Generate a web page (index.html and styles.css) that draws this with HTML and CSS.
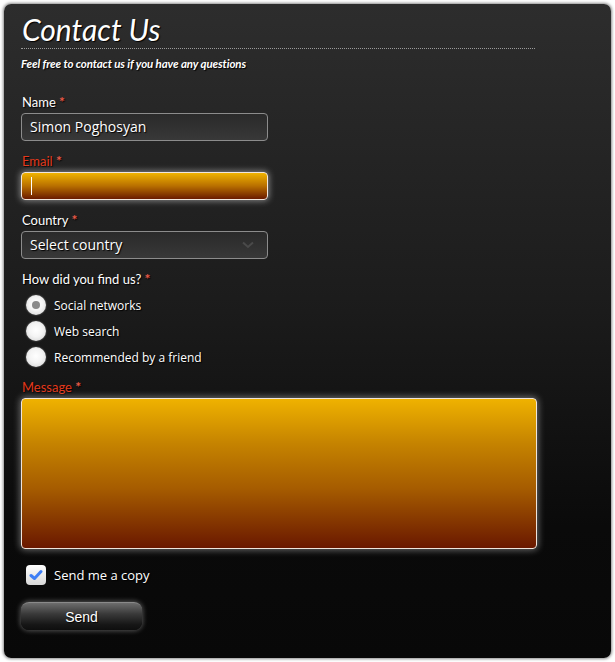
FILE: index.html
```html
<!DOCTYPE html>
<html>
<head>
<meta charset="utf-8">
<link rel="stylesheet" href="styles.css">
</head>
<body>
<form class="panel">
  <h1 class="title">Contact Us</h1>
  <p class="subtitle">Feel free to contact us if you have any questions</p>

  <div class="field">
    <label class="label">Name <span class="req">*</span></label>
    <div class="input">Simon Poghosyan</div>
  </div>

  <div class="field">
    <label class="label error">Email <span class="req">*</span></label>
    <div class="input focus"><span class="caret"></span></div>
  </div>

  <div class="field">
    <label class="label">Country <span class="req">*</span></label>
    <div class="input select">
      <span>Select country</span>
      <svg class="chev" width="12" height="8" viewBox="0 0 12 8"><path d="M1 1.5 L6 6 L11 1.5" fill="none" stroke="#4a4a4a" stroke-width="2"/></svg>
    </div>
  </div>

  <div class="field">
    <label class="label">How did you find us? <span class="req">*</span></label>
    <div class="radios">
      <div class="radio-row"><span class="radio checked"></span><span>Social networks</span></div>
      <div class="radio-row"><span class="radio"></span><span>Web search</span></div>
      <div class="radio-row"><span class="radio"></span><span>Recommended by a friend</span></div>
    </div>
  </div>

  <div class="field">
    <label class="label error">Message <span class="req">*</span></label>
    <div class="textarea"></div>
  </div>

  <div class="check-row">
    <span class="checkbox">
      <svg width="14" height="12" viewBox="0 0 14 12"><path d="M2 6.5 L5.5 9.5 L12 2.5" fill="none" stroke="#3d7ef5" stroke-width="3" stroke-linecap="round" stroke-linejoin="round"/></svg>
    </span>
    <span>Send me a copy</span>
  </div>

  <div class="actions">
    <button type="button" class="send">Send</button>
  </div>
</form>
</body>
</html>
```

FILE: styles.css
```css
html, body {
  margin: 0;
  padding: 0;
  background: #ffffff;
}
body {
  padding: 4px;
}
.panel {
  box-sizing: border-box;
  width: 607px;
  height: 654px;
  margin: 0;
  padding: 8px 18px 0 17px;
  border-radius: 7px;
  background: linear-gradient(to bottom, #2d2d2d 0%, #1c1c1c 45%, #0a0a0a 80%, #080808 100%);
  box-shadow: 0 0 3px 1px #8a8a8a;
  color: #ffffff;
  font-family: "Open Sans", sans-serif;
  display: flex;
  flex-direction: column;
}
.title {
  margin: 0;
  width: 513px;
  font-family: Lato, sans-serif;
  font-style: italic;
  font-weight: 400;
  font-size: 30px;
  line-height: 34px;
  padding: 0 0 2px 1px;
  border-bottom: 1px dotted #9a9a9a;
  text-shadow: 1px 1px 1px #000;
}
.subtitle {
  margin: 8px 0 0 0;
  font-family: Lato, sans-serif;
  font-style: italic;
  font-weight: 700;
  font-size: 11.5px;
  line-height: 14px;
  letter-spacing: -0.1px;
  text-shadow: 1px 1px 1px #000;
}
.field {
  display: flex;
  flex-direction: column;
  margin-top: 12px;
}
.field:first-of-type {
  margin-top: 23px;
}
.label {
  font-family: Lato, sans-serif;
  font-size: 13px;
  line-height: 16px;
  margin: 0 0 3px 1px;
  color: #ffffff;
  text-shadow: 1px 1px 1px #000;
}
.label.error {
  color: #e2391c;
}
.req {
  color: #e85a48;
  font-weight: 700;
  font-size: 14px;
}
.input {
  box-sizing: border-box;
  width: 247px;
  height: 28px;
  border: 1px solid #8c8c8c;
  border-radius: 4px;
  background: linear-gradient(to bottom, #2a2a2a, #383838);
  padding: 0 0 0 8px;
  font-size: 14px;
  line-height: 26px;
  color: #ffffff;
  text-shadow: 1px 1px 1px #000;
  display: flex;
  align-items: center;
}
.input.focus {
  border-color: #f2e6dc;
  background: linear-gradient(to bottom, #f0b300 0%, #b86f00 50%, #6a1a00 100%);
  box-shadow: 0 0 6px 1px rgba(255, 255, 255, 0.45);
}
.caret {
  display: block;
  width: 1px;
  height: 18px;
  background: #ffffff;
  margin-left: 1px;
}
.select {
  justify-content: space-between;
  padding-right: 13px;
}
.chev {
  display: block;
}
.radios {
  display: flex;
  flex-direction: column;
  gap: 6px;
  margin-top: 5px;
  padding-left: 5px;
}
.radio-row {
  display: flex;
  align-items: center;
  gap: 8px;
  height: 20px;
  font-size: 12px;
  text-shadow: 1px 1px 1px #000;
}
.radio {
  box-sizing: border-box;
  width: 20px;
  height: 20px;
  border-radius: 50%;
  background: radial-gradient(circle at 50% 45%, #ffffff 0%, #f4f4f4 45%, #cfcfcf 100%);
  box-shadow: 0 0 2px rgba(255, 255, 255, 0.4);
  display: flex;
  align-items: center;
  justify-content: center;
}
.radio.checked::after {
  content: "";
  width: 8px;
  height: 8px;
  border-radius: 50%;
  background: #8a8a8a;
}
.textarea {
  box-sizing: border-box;
  width: 516px;
  height: 151px;
  border: 1px solid #efe4dc;
  border-radius: 4px;
  background: linear-gradient(to bottom, #efb200 0%, #c58300 30%, #a65c00 60%, #6a1800 100%);
  box-shadow: 0 0 7px 1px rgba(255, 255, 255, 0.4);
}
.check-row {
  display: flex;
  align-items: center;
  gap: 8px;
  margin-top: 16px;
  padding-left: 5px;
  height: 20px;
  font-size: 13px;
  text-shadow: 1px 1px 1px #000;
}
.checkbox {
  box-sizing: border-box;
  width: 20px;
  height: 20px;
  border-radius: 4px;
  background: linear-gradient(to bottom, #ffffff, #d8d8d8);
  display: flex;
  align-items: center;
  justify-content: center;
}
.actions {
  margin-top: 17px;
}
.send {
  width: 121px;
  height: 28px;
  margin: 0;
  border: none;
  border-top: 1px solid #8a8a8a;
  border-radius: 8px;
  background: linear-gradient(to bottom, #6d6d6d 0%, #3a3a3a 40%, #161616 80%, #0e0e0e 100%);
  box-shadow: 0 0 5px 1px rgba(255, 255, 255, 0.3);
  color: #ffffff;
  font-family: "Liberation Sans", Arial, sans-serif;
  font-size: 14px;
  text-shadow: 1px 1px 1px #000;
  padding: 0;
  cursor: pointer;
}
```
